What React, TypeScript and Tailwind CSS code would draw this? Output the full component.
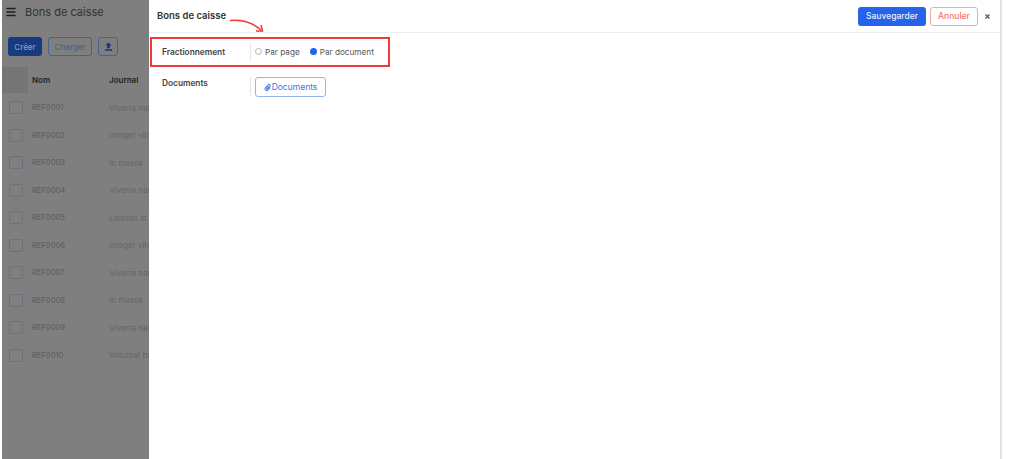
import { Menu, X } from 'lucide-react'
import { FaPaperclip } from 'react-icons/fa'

const rows = [
  { name: 'REF0001', journal: 'Viverra nam' },
  { name: 'REF0002', journal: 'Integer vitae' },
  { name: 'REF0003', journal: 'In massa' },
  { name: 'REF0004', journal: 'Viverra nam' },
  { name: 'REF0005', journal: 'Laoreet id' },
  { name: 'REF0006', journal: 'Integer vitae' },
  { name: 'REF0007', journal: 'Viverra nam' },
  { name: 'REF0008', journal: 'In massa' },
  { name: 'REF0009', journal: 'Viverra nam' },
  { name: 'REF0010', journal: 'Volutpat bibendum' },
]

function ListBehind() {
  return (
    <div className="w-[147px] shrink-0 overflow-hidden bg-[#7f7f7f]">
      <div className="flex h-[23px] items-center pl-[3px] pt-[1px]">
        <Menu className="h-[12px] w-[12px] text-[#1e1e1e]" strokeWidth={3} />
        <span className="ml-[8px] text-[11px] text-[#333333]">Bons de caisse</span>
      </div>
      <div className="mt-[14px] flex gap-[6px] pl-[6px]">
        <div className="flex h-[19px] w-[34px] items-center justify-center rounded-[3px] bg-[#173a80] text-[8px] font-medium text-[#8a9cc0]">
          Créer
        </div>
        <div className="flex h-[19px] w-[44px] items-center justify-center rounded-[3px] border border-[#47638f] text-[8px] font-medium text-[#47638f]">
          Charger
        </div>
        <div className="flex h-[19px] w-[20px] items-center justify-center rounded-[3px] border border-[#47638f]">
          <svg className="h-[11px] w-[11px] text-[#173a80]" viewBox="0 0 24 24" fill="currentColor">
            <path d="M9 16h6v-6h4l-7-7-7 7h4zm-5 2h16v3H4z" />
          </svg>
        </div>
      </div>
      <div className="mt-[11px] flex h-[26px] items-center">
        <div className="flex h-[26px] w-[26px] items-center justify-center bg-[#757575]">
          <div className="h-[13px] w-[13px] rounded-[2px] border border-[#6d7180]" />
        </div>
        <span className="ml-[4px] w-[77px] text-[8px] font-semibold text-[#222222]">Nom</span>
        <span className="text-[8px] font-semibold text-[#222222]">Journal</span>
      </div>
      <div className="mt-[1px] flex flex-col">
        {rows.map((row) => (
          <div key={row.name} className="flex h-[27.5px] items-center overflow-hidden pl-[7px]">
            <div className="h-[13px] w-[14px] shrink-0 rounded-[2px] border border-[#6b7180]" />
            <span className="ml-[9px] w-[77px] shrink-0 text-[7.5px] font-medium text-[#5f5f5f]">{row.name}</span>
            <span className="whitespace-nowrap text-[8px] text-[#666666]">{row.journal}</span>
          </div>
        ))}
      </div>
    </div>
  )
}

function Radio({ label, checked }: { label: string; checked?: boolean }) {
  return (
    <div className="flex items-center gap-[3px]">
      {checked ? (
        <div className="h-[7px] w-[7px] rounded-full bg-[#2563eb]" />
      ) : (
        <div className="h-[7px] w-[7px] rounded-full border border-[#b5b5b5]" />
      )}
      <span className="text-[8.2px] text-[#555555]">{label}</span>
    </div>
  )
}

export default function App() {
  return (
    <div className="flex h-[459px] w-[1024px] overflow-hidden bg-white pl-[2px] pr-[22px] font-['Inter',sans-serif]">
      <ListBehind />
      <div className="relative flex-1 border-r-2 border-[#dbe5e8] bg-white">
        <div className="flex h-[33px] items-center justify-between border-b border-[#eeeeee] pl-[8px] pr-[9px]">
          <span className="pt-[1px] text-[9.5px] font-semibold text-[#333333]">Bons de caisse</span>
          <div className="flex items-center">
            <button className="h-[19px] w-[68px] rounded-[3px] bg-[#2563eb] text-[8.5px] font-medium text-[#e8eefc]">
              Sauvegarder
            </button>
            <button className="ml-[4px] h-[19px] w-[48px] rounded-[3px] border border-[#fca5a5] text-[8.5px] font-medium text-[#f87171]">
              Annuler
            </button>
            <X className="ml-[6px] h-[7px] w-[7px] text-[#555555]" strokeWidth={4} />
          </div>
        </div>

        <div className="ml-[1px] mt-[4px] flex h-[30px] w-[240px] items-center border-2 border-[#f03a3a]">
          <span className="ml-[10px] w-[88px] text-[8.3px] font-semibold text-[#444444]">Fractionnement</span>
          <div className="flex h-[18px] items-center gap-[10px] border-l border-[#e5e5e5] pl-[4px]">
            <Radio label="Par page" />
            <Radio label="Par document" checked />
          </div>
        </div>

        <div className="ml-[13px] mt-[10px] flex items-start">
          <span className="w-[88px] text-[8.3px] font-semibold text-[#444444]">Documents</span>
          <div className="border-l border-[#e5e5e5] pl-[4px]">
            <button className="flex h-[20px] w-[71px] items-center justify-center gap-[1px] rounded-[3px] border border-[#93b4f5] text-[8.5px] text-[#3b74ec]">
              <FaPaperclip className="h-[7px] w-[7px]" />
              Documents
            </button>
          </div>
        </div>

        <svg className="absolute left-[80px] top-[18px]" width="36" height="15" viewBox="0 0 36 15" fill="none">
          <path d="M1 2.5 C12 1.5 23 4 32 12" stroke="#f03a3a" strokeWidth="1.5" />
          <path d="M27 13 L33.5 13 L32 7" fill="none" stroke="#f03a3a" strokeWidth="1.5" />
        </svg>
      </div>
    </div>
  )
}
